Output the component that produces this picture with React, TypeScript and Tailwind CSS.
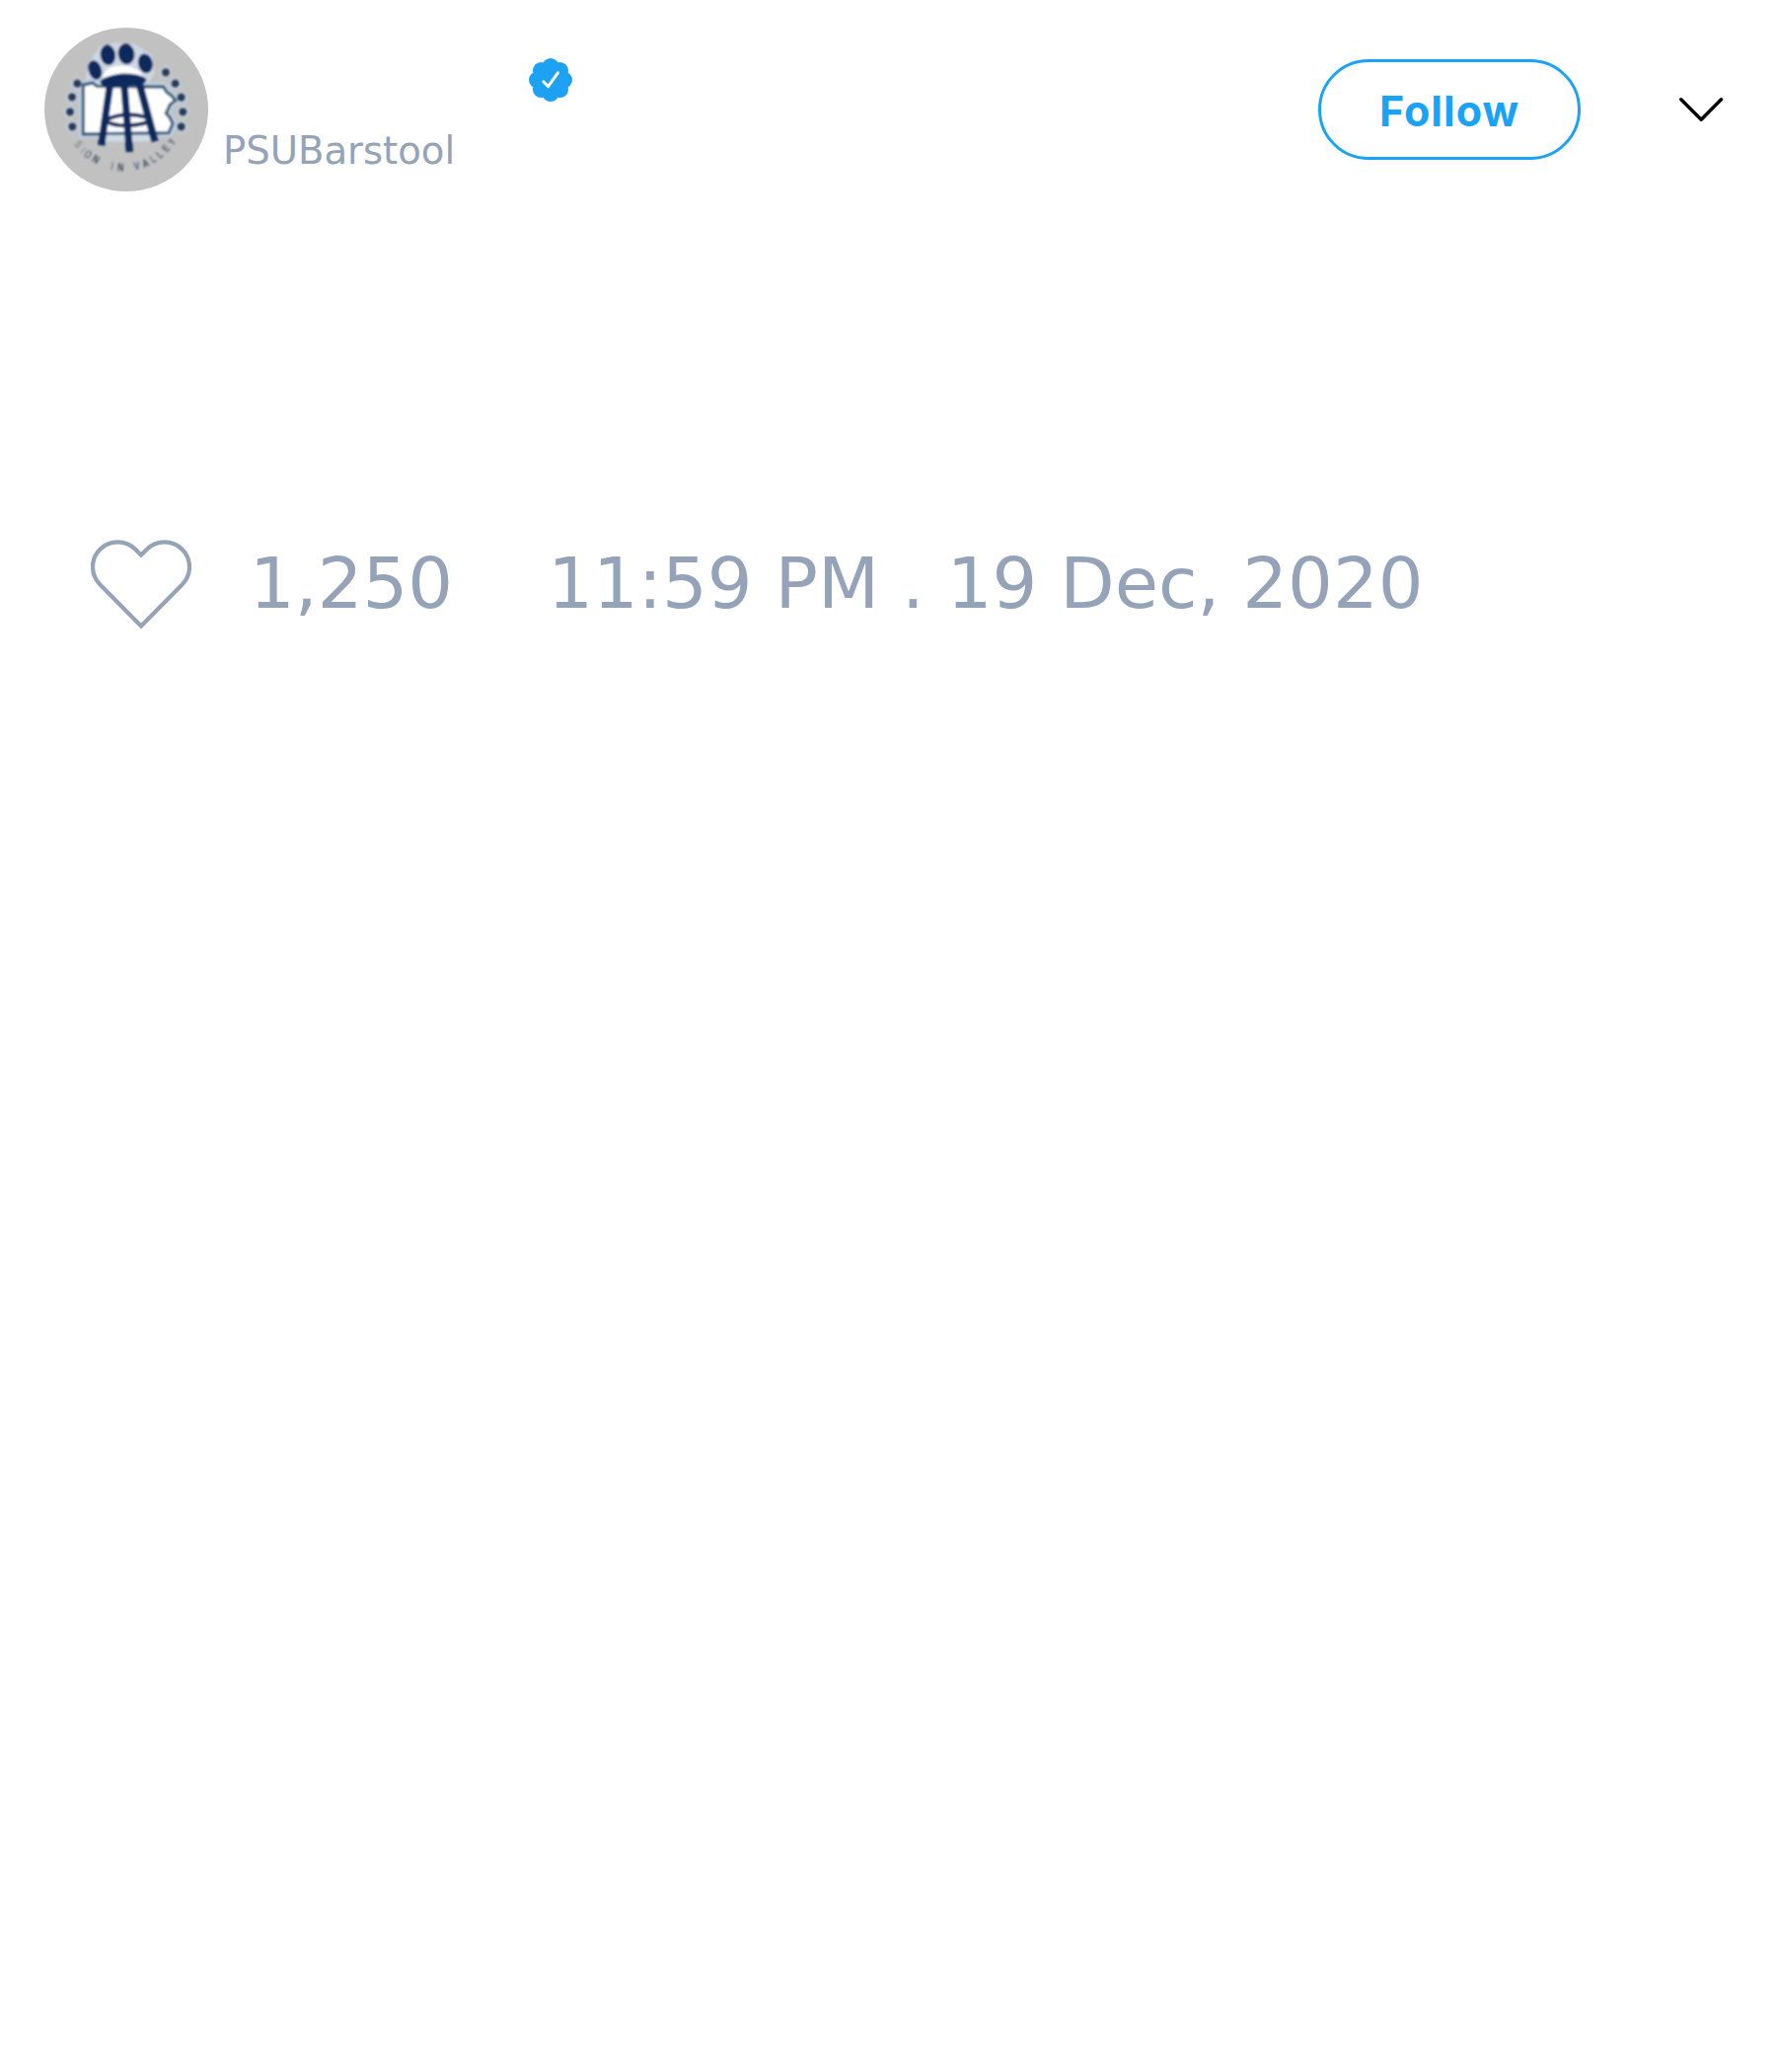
const NAVY = "#0b2a5e";

const stars = [
  [399, 160], [428, 194], [446, 236], [451, 280], [446, 325],
  [130, 194], [114, 235], [108, 280], [115, 325],
];

const motto: [string, number, number, number, string][] = [
  ["S", 134, 378, 52, "#7f8894"],
  ["I", 148, 396, 46, "#8e969f"],
  ["O", 163, 409, 40, "#66717f"],
  ["N", 187, 424, 30, "#36465d"],
  ["I", 236, 444, 8, "#7b7f93"],
  ["N", 262, 448, 3, "#3b4253"],
  ["V", 311, 444, -12, "#4f5b88"],
  ["A", 337, 436, -22, "#3c465f"],
  ["L", 360, 423, -32, "#6d7784"],
  ["L", 380, 409, -40, "#5d6879"],
  ["E", 399, 391, -48, "#58657a"],
  ["Y", 417, 371, -54, "#58657a"],
];

const PENNSYLVANIA =
  "M148 198 L176 192 L190 202 L392 204 L402 220 L418 232 L428 246 L412 258 L406 272 L400 284 L412 298 L420 316 L408 344 L148 348 Z";

function Avatar() {
  return (
    <svg className="size-[166px] shrink-0 rounded-full" viewBox="30 24 498 498" role="img" aria-label="PSUBarstool">
      <defs>
        <filter id="soft"><feGaussianBlur stdDeviation="3.2" /></filter>
      </defs>
      <rect x="30" y="24" width="498" height="498" fill="#c1c1c1" />
      <g filter="url(#soft)">
        <g fill="#c6d2de">
          {stars.map(([x, y]) => <circle key={`${x}-${y}`} cx={x} cy={y} r="19" />)}
        </g>
        <path d="M155 180 L165 130 L200 80 L245 70 L300 72 L358 108 L365 165 L340 200 L180 200 Z" fill="#ccd7e3" />
        <path d={PENNSYLVANIA} fill="#fff" stroke="#bdd3e6" strokeWidth="24" />
        <path d={PENNSYLVANIA} fill="#fff" stroke="#425e7c" strokeWidth="10" />
        <path d="M205 175 Q220 140 255 140 Q310 136 330 172 Z" fill="#fff" />
        <path d="M195 350 L372 350 L360 370 L205 370 Z" fill="#cfdce6" />
        <g fill={NAVY}>
          <ellipse cx="184" cy="153" rx="20" ry="30" transform="rotate(-18 184 153)" />
          <ellipse cx="223" cy="107" rx="23" ry="31" transform="rotate(-8 223 107)" />
          <ellipse cx="279" cy="104" rx="25" ry="32" transform="rotate(-8 279 104)" />
          <ellipse cx="337" cy="133" rx="22" ry="30" transform="rotate(-12 337 133)" />
          <path d="M199 187 Q215 170 260 164 Q318 162 340 180 Q342 197 315 198 Q270 207 220 205 Q200 201 199 187 Z" />
        </g>
        <g fill="none" stroke={NAVY}>
          <path d="M229 200 L203 382" strokeWidth="22" />
          <path d="M273 202 L289 402" strokeWidth="22" />
          <path d="M318 192 L366 370" strokeWidth="23" />
          <path d="M215 306 Q270 278 338 296 M215 308 Q265 334 344 312" strokeWidth="12" />
        </g>
        <g fill="#263d5c">
          {stars.map(([x, y]) => <circle key={`${x}-${y}`} cx={x} cy={y} r="13" />)}
        </g>
        <g fontSize="34" fontWeight="700" fontFamily="Liberation Sans, sans-serif" textAnchor="middle">
          {motto.map(([letter, x, y, angle, color]) => (
            <text key={`${x}-${y}`} fill={color} transform={`translate(${x} ${y}) rotate(${angle}) scale(0.75 1)`} y="12">
              {letter}
            </text>
          ))}
        </g>
      </g>
    </svg>
  );
}

function VerifiedBadge() {
  return (
    <svg className="size-11" viewBox="-22 -22 44 44" fill="#1da1f2" aria-label="Verified">
      <circle r="16" />
      <circle cy="-13.4" r="8.6" />
      <circle cx="9.48" cy="-9.48" r="8.6" />
      <circle cx="13.4" r="8.6" />
      <circle cx="9.48" cy="9.48" r="8.6" />
      <circle cy="13.4" r="8.6" />
      <circle cx="-9.48" cy="9.48" r="8.6" />
      <circle cx="-13.4" r="8.6" />
      <circle cx="-9.48" cy="-9.48" r="8.6" />
      <path d="M-7.2 1.8 L-2.4 6.6 L7.4 -7.2" fill="none" stroke="#fff" strokeWidth="3" strokeLinecap="round" strokeLinejoin="round" />
    </svg>
  );
}

export default function App() {
  return (
    <main className="h-[2100px] w-[1800px] overflow-hidden bg-white font-['DejaVu_Sans',sans-serif] text-[#94a3b8]">
      <header className="flex h-[222px] items-center pl-[45px] pr-[53px]">
        <Avatar />
        <div className="flex h-[166px] flex-col pl-[15px] pt-[31px]">
          <div className="flex h-11 w-[354px] justify-end"><VerifiedBadge /></div>
          <div className="mt-[26px] text-[38.6px] leading-[48px]">PSUBarstool</div>
        </div>
        <button className="ml-auto flex h-[102px] w-[266px] items-center justify-center rounded-full border-[3px] border-[#1aa3f5] pt-[2px] font-['Inter',sans-serif] text-[43px] font-bold leading-none tracking-[1px] text-[#1aa3f5]">
          Follow
        </button>
        <svg className="ml-[100px] h-[26px] w-[45px]" viewBox="0 0 45 26" fill="none" stroke="#000" strokeWidth="3.4" strokeLinecap="round" strokeLinejoin="round">
          <path d="M1.8 2.7 L22.2 23.3 L42.5 2.7" />
        </svg>
      </header>
      <footer className="mt-[325px] flex h-[91px] items-center pl-[92px] text-[72px] leading-[84px]">
        <svg className="h-[91px] w-[102px] shrink-0" viewBox="92 547 102 91" fill="none" stroke="#94a3b8" strokeWidth="4.2">
          <path d="M143 562.5 L137.2 556.7 A25.3 25.3 0 1 0 101.4 592.5 L143 634.4 L184.6 592.5 A25.3 25.3 0 1 0 148.8 556.7 Z" />
        </svg>
        <span className="ml-[59px] pb-[4px]">1,250</span>
        <span className="ml-[96px] whitespace-nowrap pb-[4px]">11:59 PM . 19 Dec, 2020</span>
      </footer>
    </main>
  );
}
